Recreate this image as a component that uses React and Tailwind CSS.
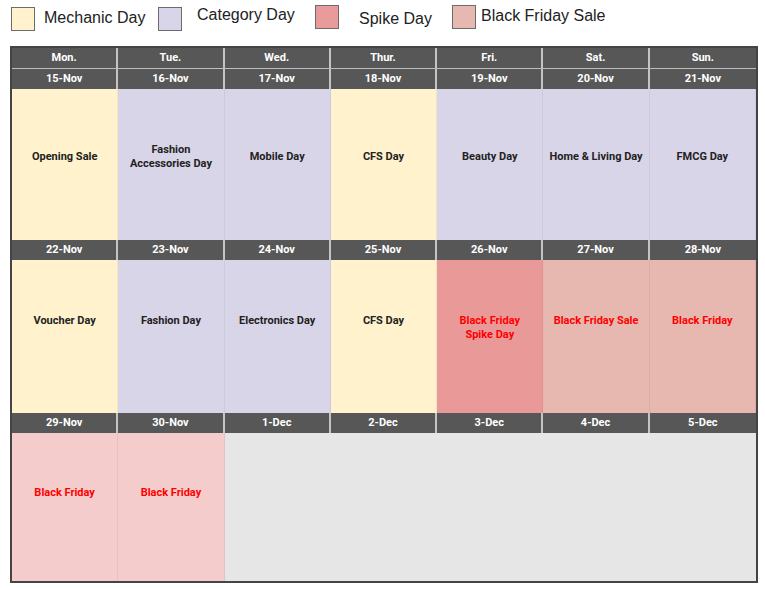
import React from 'react';

const legend = [
  { label: 'Mechanic Day', fill: 'bg-[#fff2cc]', w: 'w-[147px]', box: 'mt-[7px]', text: 'ml-[9px] mt-[8px]' },
  { label: 'Category Day', fill: 'bg-[#d9d5e8]', w: 'w-[157px]', box: 'mt-[7px]', text: 'ml-[15px] mt-[5px]' },
  { label: 'Spike Day', fill: 'bg-[#e99a9a]', w: 'w-[137px]', box: 'mt-[5px]', text: 'ml-[20px] mt-[9px]' },
  { label: 'Black Friday Sale', fill: 'bg-[#e6b8af]', w: 'w-[200px]', box: 'mt-[5px]', text: 'ml-[5px] mt-[6px]' },
];

const days = ['Mon.', 'Tue.', 'Wed.', 'Thur.', 'Fri.', 'Sat.', 'Sun.'];

const Y = 'bg-[#fff2cc]';
const L = 'bg-[#d9d5e8]';
const S = 'bg-[#ea9999]';
const B = 'bg-[#e6b8af]';
const P = 'bg-[#f4cccc]';

const weeks = [
  {
    dates: ['15-Nov', '16-Nov', '17-Nov', '18-Nov', '19-Nov', '20-Nov', '21-Nov'],
    height: 'h-[151px]',
    align: 'justify-center pb-[16px]',
    cells: [
      { t: 'Opening Sale', c: Y },
      { t: ['Fashion', 'Accessories Day'], c: L },
      { t: 'Mobile Day', c: L },
      { t: 'CFS Day', c: Y },
      { t: 'Beauty Day', c: L },
      { t: 'Home & Living Day', c: L },
      { t: 'FMCG Day', c: L },
    ],
  },
  {
    dates: ['22-Nov', '23-Nov', '24-Nov', '25-Nov', '26-Nov', '27-Nov', '28-Nov'],
    height: 'h-[153px]',
    align: 'justify-start pt-[54px]',
    cells: [
      { t: 'Voucher Day', c: Y },
      { t: 'Fashion Day', c: L },
      { t: 'Electronics Day', c: L },
      { t: 'CFS Day', c: Y },
      { t: ['Black Friday', 'Spike Day'], c: S, red: true },
      { t: 'Black Friday Sale', c: B, red: true },
      { t: 'Black Friday', c: B, red: true },
    ],
  },
  {
    dates: ['29-Nov', '30-Nov', '1-Dec', '2-Dec', '3-Dec', '4-Dec', '5-Dec'],
    height: 'h-[148px]',
    align: 'justify-start pt-[53px]',
    cells: [
      { t: 'Black Friday', c: P, red: true },
      { t: 'Black Friday', c: P, red: true },
      { t: '', c: 'bg-[#e6e6e6]', span: true },
    ],
  },
];

const HeadCell = ({ children, last }) => (
  <div
    className={`h-[20px] flex items-center justify-center bg-[#575757] text-white font-bold text-[11px] ${
      last ? '' : 'border-r-2 border-[#c4c4c4]'
    }`}
  >
    {children}
  </div>
);

const App = () => {
  return (
    <div className="w-[765px] h-[590px] bg-white" style={{ fontFamily: '"Liberation Sans", Arial, sans-serif' }}>
      <div className="flex h-[46px] pl-[11px]">
        {legend.map((item) => (
          <div key={item.label} className={`flex items-start ${item.w}`}>
            <div className={`w-[24px] h-[24px] border border-[#6b6b6b] ${item.fill} ${item.box}`} />
            <span className={`text-[16px] leading-[20px] text-[#222] ${item.text}`}>{item.label}</span>
          </div>
        ))}
      </div>

      <div
        className="ml-[10px] w-[748px] border-2 border-[#444]"
        style={{ fontFamily: 'Roboto, "Liberation Sans", sans-serif' }}
      >
        <div className="grid grid-cols-7 border-b border-[#bdbdbd]">
          {days.map((d, i) => (
            <HeadCell key={d} last={i === 6}>
              {d}
            </HeadCell>
          ))}
        </div>

        {weeks.map((w, wi) => (
          <div key={wi}>
            <div className="grid grid-cols-7">
              {w.dates.map((d, i) => (
                <HeadCell key={d} last={i === 6}>
                  {d}
                </HeadCell>
              ))}
            </div>
            <div className={`grid grid-cols-7 ${w.height}`}>
              {w.cells.map((cell, i) => (
                <div
                  key={i}
                  className={`flex flex-col items-center text-center text-[11px] leading-[14px] font-bold ${cell.c} ${
                    cell.span ? 'col-span-5' : 'border-r border-black/5'
                  } ${cell.red ? 'text-[#ff0000]' : 'text-[#222]'} ${w.align}`}
                >
                  {Array.isArray(cell.t) ? cell.t.map((line) => <span key={line}>{line}</span>) : <span>{cell.t}</span>}
                </div>
              ))}
            </div>
          </div>
        ))}
      </div>
    </div>
  );
};

export default App;
